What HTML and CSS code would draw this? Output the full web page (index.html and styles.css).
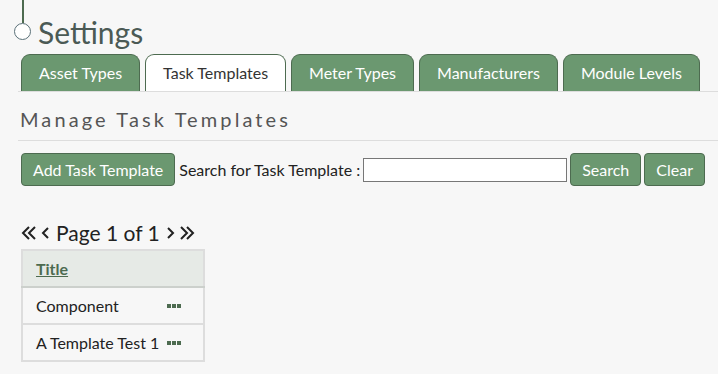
FILE: index.html
```html
<!DOCTYPE html>
<html lang="en">
<head>
  <meta charset="UTF-8" />
  <title>Settings</title>
  <link rel="stylesheet" href="styles.css">
</head>
<body>
  <div class="page-title">
    <div class="marker">
      <span class="marker-line"></span>
      <span class="marker-dot"></span>
    </div>
    <h1>Settings</h1>
  </div>

  <div class="tabs">
    <a class="tab">Asset Types</a>
    <a class="tab active">Task Templates</a>
    <a class="tab">Meter Types</a>
    <a class="tab">Manufacturers</a>
    <a class="tab">Module Levels</a>
  </div>

  <h2 class="section-title">Manage Task Templates</h2>

  <div class="toolbar">
    <button class="btn">Add Task Template</button>
    <label for="search">Search for Task Template :</label>
    <input type="text" id="search" />
    <button class="btn">Search</button>
    <button class="btn">Clear</button>
  </div>

  <div class="pager">
    <svg width="16" height="16" viewBox="0 0 16 16"><path d="M8 2 L2 8 L8 14 M14 2 L8 8 L14 14" fill="none" stroke="#222" stroke-width="2"/></svg>
    <svg width="9" height="16" viewBox="0 0 9 16"><path d="M7 3 L2 8 L7 13" fill="none" stroke="#222" stroke-width="2"/></svg>
    <span>Page 1 of 1</span>
    <svg width="9" height="16" viewBox="0 0 9 16"><path d="M2 3 L7 8 L2 13" fill="none" stroke="#222" stroke-width="2"/></svg>
    <svg width="16" height="16" viewBox="0 0 16 16"><path d="M2 2 L8 8 L2 14 M8 2 L14 8 L8 14" fill="none" stroke="#222" stroke-width="2"/></svg>
  </div>

  <table class="grid">
    <thead>
      <tr><th colspan="2"><a href="#">Title</a></th></tr>
    </thead>
    <tbody>
      <tr><td>Component</td><td class="more"><span></span><span></span><span></span></td></tr>
      <tr><td>A Template Test 1</td><td class="more"><span></span><span></span><span></span></td></tr>
    </tbody>
  </table>
</body>
</html>
```

FILE: styles.css
```css
* {
  margin: 0;
  padding: 0;
  box-sizing: border-box;
}

body {
  font-family: 'Lato', sans-serif;
  background: #f7f7f7;
  color: #222;
  width: 718px;
  height: 374px;
  overflow: hidden;
}

.page-title {
  display: flex;
  align-items: flex-end;
  padding-left: 14px;
  height: 52px;
}

.marker {
  display: flex;
  flex-direction: column;
  align-items: center;
  width: 17px;
  margin-bottom: 12px;
}

.marker-line {
  width: 2px;
  height: 24px;
  background: #4d6b50;
}

.marker-dot {
  width: 17px;
  height: 17px;
  border: 1.5px solid #5a7078;
  border-radius: 50%;
  background: #fff;
}

.page-title h1 {
  font-weight: 400;
  font-size: 30px;
  color: #4b5a55;
  margin-left: 7px;
  line-height: 40px;
}

.tabs {
  display: flex;
  gap: 5px;
  margin: 2px 0 0 18px;
  padding-left: 3px;
  border-bottom: 1px solid #ddd;
}

.tab {
  height: 37px;
  line-height: 35px;
  padding: 0 17px;
  background: #6b9870;
  color: #fff;
  font-size: 16px;
  border: 1px solid #4d6b50;
  border-bottom: none;
  border-radius: 9px 9px 0 0;
}

.tab.active {
  background: #fff;
  color: #333;
}

.section-title {
  font-weight: 400;
  font-size: 20px;
  letter-spacing: 3.1px;
  color: #555;
  margin-left: 18px;
  padding: 15px 0 9px 2px;
  border-bottom: 1px solid #ddd;
}

.toolbar {
  display: flex;
  align-items: center;
  gap: 3px;
  margin: 12px 0 0 21px;
  font-size: 16px;
}

.btn {
  font-family: inherit;
  font-size: 16px;
  height: 33px;
  padding: 0 11px;
  background: #6b9870;
  color: #fff;
  border: 1px solid #4d6b50;
  border-radius: 4px;
}

.toolbar label {
  margin-left: 1px;
}

.toolbar input {
  width: 204px;
  height: 24px;
  border: 1px solid #777;
  background: #fff;
}

.pager {
  display: flex;
  align-items: center;
  gap: 4px;
  margin: 30px 0 0 21px;
  font-size: 21px;
  color: #222;
  line-height: 33px;
}

.pager span {
  margin: 0 2px;
}

.grid {
  margin: 0 0 0 21px;
  border-collapse: collapse;
  border: 2px solid #ddd;
  font-size: 16px;
}

.grid th {
  background: #e6eae6;
  text-align: left;
  height: 37px;
  padding: 0 13px;
  border-bottom: 2px solid #ccd0cc;
}

.grid th a {
  color: #4d6b50;
  font-weight: 700;
}

.grid td {
  height: 37px;
  padding: 0 0 0 13px;
  border-bottom: 2px solid #ddd;
  white-space: nowrap;
}

.grid td.more {
  padding: 0 21px 0 8px;
  font-size: 0;
}

.more span {
  display: inline-block;
  width: 4px;
  height: 4px;
  margin-right: 1px;
  background: #4d6b50;
}
```
